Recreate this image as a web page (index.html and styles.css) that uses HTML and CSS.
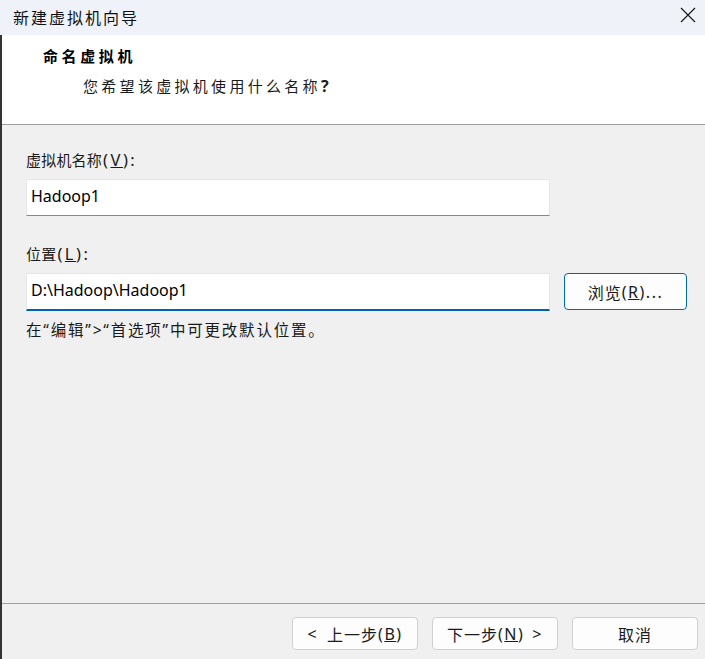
FILE: index.html
```html
<!DOCTYPE html>
<html lang="zh-CN">
<head>
<meta charset="utf-8">
<title>新建虚拟机向导</title>
<link rel="stylesheet" href="styles.css">
</head>
<body>
<div class="window">
  <div class="titlebar">
    <span class="title">新建虚拟机向导</span>
    <svg class="close" width="16" height="16" viewBox="0 0 16 16"><path d="M1 1 L15 15 M15 1 L1 15" stroke="#1a1a1a" stroke-width="1.2" fill="none"/></svg>
  </div>
  <div class="main">
    <div class="header">
      <div class="h-title">命名虚拟机</div>
      <div class="h-sub">您希望该虚拟机使用什么名称<span class="q">?</span></div>
    </div>
    <div class="content">
      <div class="label">虚拟机名称<span class="acc">(<u>V</u>):</span></div>
      <div class="row">
        <div class="input">Hadoop1</div>
      </div>
      <div class="label second">位置<span class="acc">(<u>L</u>):</span></div>
      <div class="row">
        <div class="input focus">D:\Hadoop\Hadoop1</div>
        <div class="btn browse">浏览<span class="acc">(<u>R</u>)...</span></div>
      </div>
      <div class="hint">在“编辑”&gt;“首选项”中可更改默认位置。</div>
    </div>
    <div class="footer">
      <div class="btn"><span class="acc lt">&lt;</span>上一步<span class="acc">(<u>B</u>)</span></div>
      <div class="btn">下一步<span class="acc">(<u>N</u>)</span><span class="acc gt">&gt;</span></div>
      <div class="btn">取消</div>
    </div>
  </div>
</div>
</body>
</html>
```
FILE: styles.css
```css
* { box-sizing: border-box; }
html, body { margin: 0; padding: 0; }
body {
  width: 705px;
  height: 659px;
  overflow: hidden;
  background: #f0f0f0;
  font-family: "Noto Sans", "Noto Sans CJK SC", sans-serif;
  color: #1a1a1a;
}
.window {
  display: flex;
  flex-direction: column;
  height: 659px;
}
.titlebar {
  height: 35px;
  background: #eff3f9;
  display: flex;
  align-items: center;
  justify-content: space-between;
  padding: 0 9px 1px 13px;
  flex: none;
}
.title {
  font-size: 16px;
  letter-spacing: 2px;
  color: #111;
}
.close { display: block; margin-top: -4px; }
.main {
  flex: 1;
  display: flex;
  flex-direction: column;
  border-left: 2px solid #333;
}
.header {
  height: 90px;
  background: #fff;
  border-bottom: 1px solid #a0a0a0;
  padding: 11px 0 0 41px;
  flex: none;
}
.h-title {
  font-size: 15px;
  font-weight: bold;
  letter-spacing: 3.6px;
  line-height: 20px;
  color: #000;
}
.h-sub {
  font-size: 15px;
  letter-spacing: 3.3px;
  line-height: 20px;
  margin: 10px 0 0 40px;
  color: #1a1a1a;
}
.h-sub .q { font-weight: bold; font-size: 16px; letter-spacing: 0; }
.content {
  flex: 1;
  padding: 25px 0 0 24px;
  display: flex;
  flex-direction: column;
  align-items: flex-start;
}
.label {
  font-size: 15px;
  line-height: 20px;
  margin-bottom: 9px;
  letter-spacing: 0.2px;
}
.acc {
  font-size: 16px;
  letter-spacing: 1.5px;
}
.label .acc { font-size: 16.5px; letter-spacing: 2.5px; margin-left: 1px; }
.btn .lt { margin-right: 9px; }
.btn .gt { margin-left: 8px; }
.label.second { margin-top: 28px; }
.row {
  display: flex;
  gap: 14px;
  align-items: stretch;
}
.input {
  width: 524px;
  height: 37px;
  background: #fff;
  border: 1px solid #e6e6e6;
  border-bottom: 1px solid #888;
  padding: 0 0 4px 4px;
  font-size: 16px;
  color: #000;
  display: flex;
  align-items: center;
}
.input.focus {
  height: 38px;
  border-bottom: 2px solid #005fb8;
}
.btn {
  width: 126px;
  height: 33px;
  background: #fdfdfd;
  border: 1px solid #d0d0d0;
  border-radius: 4px;
  display: flex;
  align-items: center;
  justify-content: center;
  font-size: 16px;
  letter-spacing: 1px;
  color: #1a1a1a;
}
.btn.browse {
  width: 123px;
  height: 37px;
  border-color: #0067c0;
}
.hint {
  font-size: 15.5px;
  line-height: 20px;
  margin-top: 9px;
  letter-spacing: 1.8px;
}
.footer {
  height: 56px;
  border-top: 1px solid #a0a0a0;
  display: flex;
  justify-content: flex-end;
  gap: 14px;
  padding: 13px 7px 0 0;
  flex: none;
}
```
